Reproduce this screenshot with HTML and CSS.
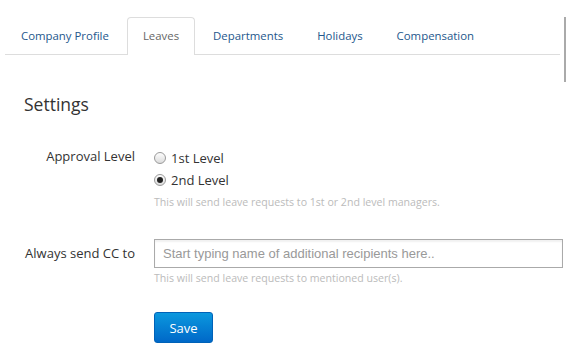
FILE: index.html
```html
<!DOCTYPE html>
<html>
<head>
    <meta charset="utf-8">
    <meta name="viewport" content="width=device-width, initial-scale=1">
    <title>Settings - Leaves</title>
    <link rel="stylesheet" href="styles.css">
</head>
<body>
    <div class="page">
        <nav class="tabs">
            <a href="#" class="tab">Company Profile</a>
            <a href="#" class="tab -active">Leaves</a>
            <a href="#" class="tab">Departments</a>
            <a href="#" class="tab">Holidays</a>
            <a href="#" class="tab">Compensation</a>
        </nav>

        <section class="settings">
            <h2>Settings</h2>

            <form class="form">
                <div class="form-row">
                    <label class="form-label">Approval Level</label>
                    <div class="form-control">
                        <label class="radio"><input type="radio" name="level"> 1st Level</label>
                        <label class="radio"><input type="radio" name="level" checked> 2nd Level</label>
                        <span class="help">This will send leave requests to 1st or 2nd level managers.</span>
                    </div>
                </div>

                <div class="form-row -input">
                    <label class="form-label" for="cc">Always send CC to</label>
                    <div class="form-control">
                        <input type="text" id="cc" class="text-input" placeholder="Start typing name of additional recipients here..">
                        <span class="help">This will send leave requests to mentioned user(s).</span>
                    </div>
                </div>

                <div class="form-row -actions">
                    <span></span>
                    <div class="form-control">
                        <button type="button" class="button">Save</button>
                    </div>
                </div>
            </form>
        </section>
    </div>
</body>
</html>
```

FILE: styles.css
```css
* { box-sizing: border-box; margin: 0; }

body {
    margin: 0;
    background: #fff;
    font-family: "Open Sans", sans-serif;
    font-size: 12px;
    color: #333;
}

.page {
    position: relative;
    min-height: 100vh;
}

/* the panel edge at the top right */
.page::after {
    content: "";
    position: absolute;
    top: 0;
    right: 0;
    width: 2px;
    height: 65px;
    background: #aaa;
}

.tabs {
    display: flex;
    gap: 2px;
    margin: 17px 6px 0 5px;
    border-bottom: 1px solid #ddd;
}

.tab {
    display: block;
    padding: 0 15px;
    height: 37px;
    line-height: 36px;
    font-size: 11.4px;
    color: #24578c;
    text-decoration: none;
    border: 1px solid transparent;
    border-bottom: none;
    border-radius: 4px 4px 0 0;
    margin-bottom: -1px;
}

.tab.-active {
    color: #666;
    background: #fff;
    border-color: #ddd;
    height: 38px;
}

.settings {
    padding: 0 3px 0 24px;
}

.settings h2 {
    font-size: 17.5px;
    font-weight: 400;
    color: #333;
    margin-top: 37px;
    line-height: 24px;
}

.form {
    margin-top: 31px;
}

.form-row {
    display: grid;
    grid-template-columns: 111px 1fr;
    gap: 19px;
}

.form-row.-input {
    margin-top: 30px;
}

.form-row.-actions {
    margin-top: 27px;
}

.form-label {
    text-align: right;
    font-size: 13px;
    line-height: 18px;
}

.form-row.-input .form-label {
    line-height: 28px;
}

.form-control {
    display: flex;
    flex-direction: column;
    align-items: flex-start;
}

.radio {
    display: flex;
    align-items: center;
    gap: 5px;
    font-size: 13px;
    line-height: 22px;
}

.radio input {
    appearance: none;
    width: 12px;
    height: 12px;
    border-radius: 50%;
    border: 1px solid #9a9a9a;
    background: linear-gradient(#fdfdfd, #dcdcdc);
    margin: 0;
    display: grid;
    place-items: center;
}

.radio input:checked::after {
    content: "";
    width: 6px;
    height: 6px;
    border-radius: 50%;
    background: #222;
}

.help {
    color: #bbb;
    font-size: 10.6px;
    margin-top: 4px;
}

.form-row.-input .help {
    margin-top: 3px;
}

.text-input {
    width: 100%;
    height: 29px;
    border: 1px solid #aaa;
    box-shadow: inset 0 2px 2px rgba(0, 0, 0, .06);
    padding: 0 8px;
    font-family: "Liberation Sans", Arial, sans-serif;
    font-size: 13px;
    color: #333;
}

.text-input::placeholder {
    color: #999;
}

.button {
    width: 59px;
    height: 31px;
    border: 1px solid #0062b8;
    border-radius: 3px;
    background: linear-gradient(#0b98de, #0068c8);
    color: #fff;
    font-family: inherit;
    font-size: 13px;
    cursor: pointer;
}
```
